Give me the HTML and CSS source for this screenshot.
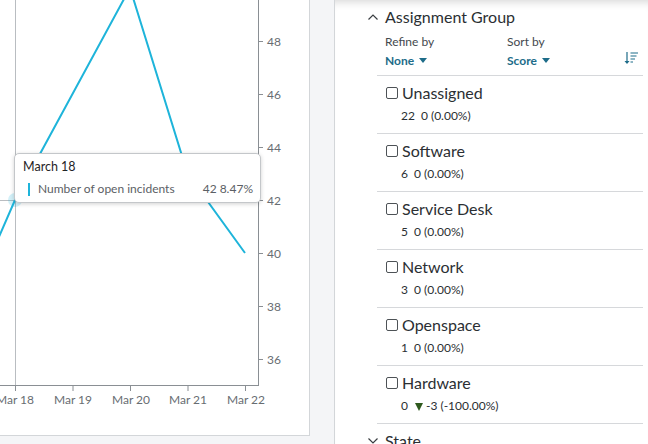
FILE: index.html
```html
<!DOCTYPE html>
<html lang="en">
<head>
  <meta charset="UTF-8">
  <meta name="viewport" content="width=device-width, initial-scale=1.0">
  <title>Open incidents by assignment group</title>
  <link rel="stylesheet" href="styles.css">
</head>
<body>
  <div class="layout">
    <div class="chart-card">
      <svg class="chart" width="309" height="435" viewBox="0 0 309 435">
        <!-- crosshair -->
        <line class="crosshair" x1="15.5" y1="0" x2="15.5" y2="385"></line>
        <line class="crosshair" x1="0" y1="200.5" x2="15" y2="200.5"></line>

        <!-- axes -->
        <line class="axis" x1="258.5" y1="0" x2="258.5" y2="386"></line>
        <line class="axis" x1="0" y1="385.5" x2="259" y2="385.5"></line>

        <g class="ticks">
          <line x1="258" y1="41.5" x2="263" y2="41.5"></line>
          <line x1="258" y1="94.5" x2="263" y2="94.5"></line>
          <line x1="258" y1="147.5" x2="263" y2="147.5"></line>
          <line x1="258" y1="200.5" x2="263" y2="200.5"></line>
          <line x1="258" y1="253.5" x2="263" y2="253.5"></line>
          <line x1="258" y1="306.5" x2="263" y2="306.5"></line>
          <line x1="258" y1="359.5" x2="263" y2="359.5"></line>
          <line x1="15.5" y1="385" x2="15.5" y2="391"></line>
          <line x1="73" y1="385" x2="73" y2="391"></line>
          <line x1="130.5" y1="385" x2="130.5" y2="391"></line>
          <line x1="188" y1="385" x2="188" y2="391"></line>
          <line x1="245.5" y1="385" x2="245.5" y2="391"></line>
        </g>

        <g class="labels">
          <text x="267" y="45.5">48</text>
          <text x="267" y="98.5">46</text>
          <text x="267" y="151.5">44</text>
          <text x="267" y="204.5">42</text>
          <text x="267" y="257.5">40</text>
          <text x="267" y="310.5">38</text>
          <text x="267" y="363.5">36</text>
        </g>
        <g class="labels center">
          <text x="15" y="404">Mar 18</text>
          <text x="73" y="404">Mar 19</text>
          <text x="131" y="404">Mar 20</text>
          <text x="188" y="404">Mar 21</text>
          <text x="246" y="404">Mar 22</text>
        </g>

        <path class="series" d="M -42.5 332.5 L 15 200 L 130 -12 L 187.5 173.5 L 245 253"></path>
        <circle class="hover-dot" cx="15" cy="200" r="7"></circle>
      </svg>

      <div class="tooltip">
        <div class="tooltip-title">March 18</div>
        <div class="tooltip-row">
          <span class="swatch"></span>
          <span class="tooltip-label">Number of open incidents</span>
          <span class="tooltip-value">42 8.47%</span>
        </div>
      </div>
    </div>

    <div class="side-panel">
      <div class="group">
        <div class="group-header">
          <svg class="chevron" width="10" height="6" viewBox="0 0 10 6"><path d="M0.5 5.5 L5 1 L9.5 5.5"></path></svg>
          <span>Assignment Group</span>
        </div>
        <div class="controls">
          <div class="control refine">
            <div class="control-label">Refine by</div>
            <div class="control-value">None <span class="caret"></span></div>
          </div>
          <div class="control">
            <div class="control-label">Sort by</div>
            <div class="control-value">Score <span class="caret"></span></div>
          </div>
          <svg class="sort-icon" width="16" height="13" viewBox="0 0 16 13">
            <path class="stroke" d="M3 0 V11"></path>
            <path class="fill" d="M0.5 9 H5.5 L3 12 Z"></path>
            <path class="stroke" d="M6.5 1 H14 M6.5 4 H12.5 M6.5 7 H11 M6.5 10 H9"></path>
          </svg>
        </div>

        <div class="item">
          <div class="item-name"><span class="checkbox"></span>Unassigned</div>
          <div class="item-stats"><span class="count">22</span>0 (0.00%)</div>
        </div>
        <div class="item">
          <div class="item-name"><span class="checkbox"></span>Software</div>
          <div class="item-stats"><span class="count">6</span>0 (0.00%)</div>
        </div>
        <div class="item">
          <div class="item-name"><span class="checkbox"></span>Service Desk</div>
          <div class="item-stats"><span class="count">5</span>0 (0.00%)</div>
        </div>
        <div class="item">
          <div class="item-name"><span class="checkbox"></span>Network</div>
          <div class="item-stats"><span class="count">3</span>0 (0.00%)</div>
        </div>
        <div class="item">
          <div class="item-name"><span class="checkbox"></span>Openspace</div>
          <div class="item-stats"><span class="count">1</span>0 (0.00%)</div>
        </div>
        <div class="item">
          <div class="item-name"><span class="checkbox"></span>Hardware</div>
          <div class="item-stats"><span class="count">0</span><span class="down"></span>-3 (-100.00%)</div>
        </div>
      </div>

      <div class="group">
        <div class="group-header">
          <svg class="chevron" width="10" height="6" viewBox="0 0 10 6"><path d="M0.5 0.5 L5 5 L9.5 0.5"></path></svg>
          <span>State</span>
        </div>
      </div>
    </div>
  </div>
</body>
</html>
```

FILE: styles.css
```css
body {
  margin: 0;
  font-family: Lato, "Open Sans", sans-serif;
  background-color: #f4f5f7;
  color: #2e3236;
  overflow: hidden;
}
.layout {
  display: flex;
  align-items: flex-start;
  height: 444px;
}
.chart-card {
  position: relative;
  width: 309px;
  height: 435px;
  flex: none;
  background-color: #fff;
  border-right: 1px solid #d3d6d9;
  border-bottom: 1px solid #d3d6d9;
}
.chart {
  display: block;
}
.crosshair {
  stroke: #b9bdc1;
  stroke-width: 1;
}
.axis {
  stroke: #8a8f94;
  stroke-width: 1;
}
.ticks line {
  stroke: #8a8f94;
  stroke-width: 1;
}
.labels text {
  font-family: Lato, sans-serif;
  font-size: 12px;
  fill: #686d72;
}
.labels.center text {
  text-anchor: middle;
}
.series {
  fill: none;
  stroke: #1eb4da;
  stroke-width: 2;
}
.hover-dot {
  fill: rgba(30, 180, 218, 0.2);
}
.tooltip {
  position: absolute;
  left: 14px;
  top: 153px;
  width: 230px;
  padding: 5px 7px 5px 8px;
  background-color: #fff;
  border: 1px solid #c4c7ca;
  border-radius: 5px;
  box-shadow: 0 1px 4px rgba(0, 0, 0, 0.18);
}
.tooltip-title {
  font-size: 12.5px;
  line-height: 16px;
  color: #1f2326;
}
.tooltip-row {
  display: flex;
  align-items: center;
  margin-top: 6px;
  font-size: 12px;
  line-height: 16px;
  color: #5b6065;
}
.swatch {
  width: 2px;
  height: 13px;
  margin: 0 8px 0 5px;
  background-color: #1eb4da;
}
.tooltip-value {
  margin-left: auto;
}
.side-panel {
  flex: 1;
  align-self: stretch;
  margin-left: 24px;
  padding: 0 5px 0 42px;
  background-color: #fff;
  border-left: 1px solid #d3d6d9;
  box-shadow: inset 0 9px 8px -7px rgba(0, 0, 0, 0.16);
}
.group-header {
  display: flex;
  align-items: center;
  gap: 7px;
  margin-left: -9px;
  padding-top: 7px;
  font-size: 16px;
  line-height: 20px;
  color: #2b2f33;
}
.chevron path {
  fill: none;
  stroke: #3a3e42;
  stroke-width: 1.2;
}
.controls {
  display: flex;
  align-items: flex-end;
  padding: 7px 0 6px 8px;
  border-bottom: 1px solid #d6d8db;
}
.control.refine {
  width: 122px;
}
.control-label {
  font-size: 12px;
  line-height: 16px;
  color: #44494e;
}
.control-value {
  margin-top: 3px;
  font-size: 12px;
  line-height: 16px;
  font-weight: bold;
  color: #1d6c89;
}
.caret {
  display: inline-block;
  width: 0;
  height: 0;
  margin-left: 2px;
  vertical-align: 2px;
  border-left: 4px solid transparent;
  border-right: 4px solid transparent;
  border-top: 5px solid #1d6c89;
}
.sort-icon {
  margin: 0 3px 4px auto;
}
.sort-icon .stroke {
  fill: none;
  stroke: #1d6c89;
  stroke-width: 1.2;
}
.sort-icon .fill {
  fill: #1d6c89;
}
.item {
  padding: 7px 0 9px 9px;
  border-bottom: 1px solid #d6d8db;
}
.item-name {
  display: flex;
  align-items: center;
  font-size: 16px;
  line-height: 20px;
  color: #2b2f33;
}
.checkbox {
  width: 10px;
  height: 10px;
  margin-right: 4px;
  border: 1px solid #4d5256;
  border-radius: 2px;
}
.item-stats {
  margin-top: 5px;
  padding-left: 15px;
  font-size: 12px;
  line-height: 16px;
  color: #2b2f33;
}
.count {
  margin-right: 6px;
}
.down {
  display: inline-block;
  width: 0;
  height: 0;
  margin: 0 3px 0 1px;
  vertical-align: -1px;
  border-left: 4px solid transparent;
  border-right: 4px solid transparent;
  border-top: 8px solid #2f5a1e;
}
```
